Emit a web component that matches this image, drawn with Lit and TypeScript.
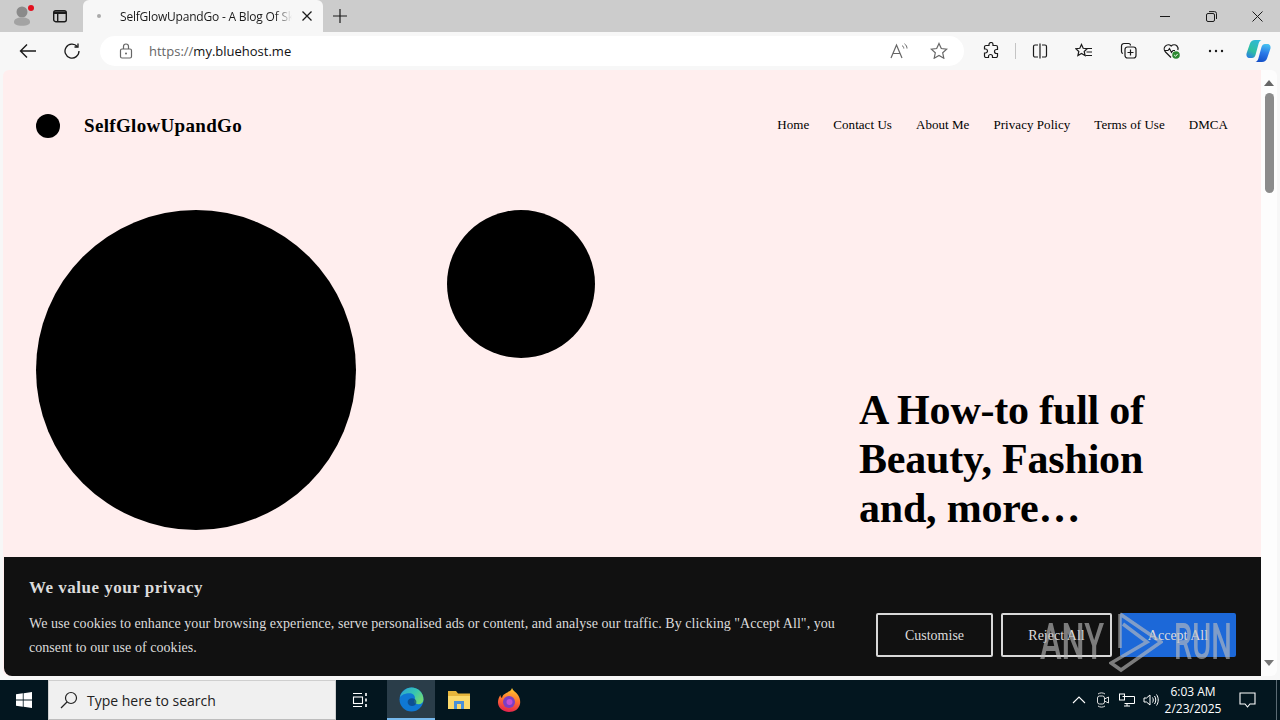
import { LitElement, html, css, svg } from 'lit';
import { customElement } from 'lit/decorators.js';

const icon = (w: number, h: number, body: unknown, vb = `0 0 ${w} ${h}`) => html`
  <svg width=${w} height=${h} viewBox=${vb} fill="none" stroke="currentColor" stroke-width="1.2">${body}</svg>
`;

const navLinks = ['Home', 'Contact Us', 'About Me', 'Privacy Policy', 'Terms of Use', 'DMCA'];

@customElement('browser-chrome')
export class BrowserChrome extends LitElement {
  static styles = css`
    :host { display: block; font-family: "Open Sans", "Noto Sans", sans-serif; color: #1a1a1a; }
    .tabstrip { height: 32px; background: #cccccc; display: flex; align-items: flex-end; }
    .profile { width: 43px; height: 32px; display: flex; align-items: center; justify-content: center; position: relative; padding-left: 1px; box-sizing: border-box; }
    .dot { position: absolute; top: 5px; left: 28px; width: 6px; height: 6px; border-radius: 50%; background: #e3101f; }
    .tabs-btn { width: 34px; height: 32px; display: flex; align-items: center; justify-content: center; margin-right: 6px; }
    .tab { width: 240px; height: 32px; box-sizing: border-box; background: #f7f7f7; border-radius: 6px 6px 0 0; display: flex; align-items: center; padding-left: 14px; font-size: 12px; }
    .favicon { width: 4px; height: 4px; border-radius: 50%; background: #aaa; margin-right: 19px; flex: none; }
    .tab-title { width: 172px; white-space: nowrap; overflow: hidden; flex: none; letter-spacing: -0.2px; -webkit-mask-image: linear-gradient(90deg, #000 90%, transparent); mask-image: linear-gradient(90deg, #000 90%, transparent); }
    .tab-close { margin-left: 9px; display: flex; }
    .plus { margin-left: 9px; height: 32px; display: flex; align-items: center; }
    .spacer { flex: 1; }
    .win { width: 46px; height: 32px; display: flex; align-items: center; justify-content: center; }
    .toolbar { height: 36px; box-sizing: border-box; padding-top: 1px; background: #f7f7f7; display: flex; align-items: center; }
    .nav-btn { width: 44px; height: 35px; display: flex; align-items: center; justify-content: center; flex: none; }
    .nav-btn.first { margin-left: 6px; }
    .address { width: 864px; height: 30px; box-sizing: border-box; margin-left: 6px; background: #fff; border-radius: 15px; display: flex; align-items: center; padding-left: 19px; font-size: 13px; flex: none; }
    .url { margin-left: 16px; color: #111; flex: 1; }
    .url span { color: #666; }
    .addr-icon { display: flex; color: #666; margin-right: 22px; }
    .addr-icon.star { margin-right: 16px; }
    .ext { margin-left: 19px; display: flex; }
    .sep { width: 1px; height: 16px; background: #c4c4c4; margin: 0 2px 0 16px; }
    .tool { width: 44px; display: flex; justify-content: center; flex: none; }
    .copilot { margin-left: -2px; }
  `;

  render() {
    return html`
      <div class="tabstrip">
        <div class="profile">
          ${icon(16, 20, svg`<circle cx="8" cy="6" r="5.5" fill="#8a8a8a" stroke="none"/><path d="M0 16c0-3 3-4.500 8-4.500s8 1.500 8 4.500c0 2.500-3 3.800-8 3.800S0 18.500 0 16z" fill="#a3a3a3" stroke="none"/>`)}
          <div class="dot"></div>
        </div>
        <div class="tabs-btn">
          ${icon(16, 16, svg`<rect x="1.700" y="2.700" width="12.600" height="11" rx="2" stroke-width="1.400"/><path d="M5.700 6v7.500" stroke-width="1.400"/><path d="M2 3.500h12V6H2z" fill="currentColor" stroke="none"/>`)}
        </div>
        <div class="tab">
          <div class="favicon"></div>
          <div class="tab-title">SelfGlowUpandGo - A Blog Of Skin</div>
          <div class="tab-close">${icon(12, 12, svg`<path d="M1.500 1.500l9 9M10.500 1.500l-9 9" stroke-width="1.300"/>`)}</div>
        </div>
        <div class="plus">${icon(16, 16, svg`<path d="M8 1v14M1 8h14" stroke-width="1.200"/>`)}</div>
        <div class="spacer"></div>
        <div class="win">${icon(10, 10, svg`<path d="M0 5.500h10" stroke-width="1"/>`)}</div>
        <div class="win">${icon(11, 11, svg`<rect x=".5" y="2.500" width="8" height="8" rx="1.500" stroke-width="1"/><path d="M3 .6h5.500a2 2 0 0 1 2 2V8" stroke-width="1"/>`)}</div>
        <div class="win">${icon(11, 11, svg`<path d="M.5.5l10 10M10.500.5l-10 10" stroke-width="1"/>`)}</div>
      </div>
      <div class="toolbar">
        <div class="nav-btn first">${icon(18, 16, svg`<path d="M17 8H1.500M8 1.500L1.500 8 8 14.500" stroke-width="1.400"/>`)}</div>
        <div class="nav-btn">${icon(16, 16, svg`<path d="M13.300 3.500A7 7 0 1 0 15 8" stroke-width="1.300"/><path d="M14 .5V4h-3.500" stroke-width="1.300"/>`)}</div>
        <div class="address">
          ${icon(14, 16, svg`<rect x="1.500" y="6" width="11" height="9" rx="1.500" stroke="#666"/><path d="M4.500 6V3.500a2.500 2.500 0 0 1 5 0V6" stroke="#666"/><circle cx="7" cy="10.500" r="1" fill="#666" stroke="none"/>`)}
          <div class="url"><span>https://</span>my.bluehost.me</div>
          <div class="addr-icon">${icon(18, 16, svg`<path d="M1 15L6.500 2 12 15M3 10.500h7" stroke-width="1.200"/><path d="M12 2.500c1.200.8 1.800 1.800 1.800 3M14.500.8c1.600 1.200 2.500 2.700 2.500 4.700" stroke-width="1"/>`)}</div>
          <div class="addr-icon star">${icon(18, 17, svg`<path d="M9 1.500l2.300 5 5.400.6-4 3.700 1.100 5.400L9 13.500l-4.800 2.700 1.100-5.400-4-3.700 5.400-.6z" stroke-width="1.200"/>`)}</div>
        </div>
        <div class="ext">${icon(16, 17, svg`<path d="M6 2.500a2 2 0 0 1 4 0v1h3A1.500 1.500 0 0 1 14.500 5v2.500h-1a2 2 0 0 0 0 4h1V14a1.500 1.500 0 0 1-1.500 1.500H9.500v-1a2 2 0 0 0-4 0v1H3A1.500 1.500 0 0 1 1.500 14v-3h1a2 2 0 0 0 0-4h-1V5A1.500 1.500 0 0 1 3 3.500h3z" stroke-width="1.200"/>`)}</div>
        <div class="sep"></div>
        <div class="tool">${icon(16, 16, svg`<path d="M6 2H3a1.500 1.500 0 0 0-1.500 1.500v9A1.500 1.500 0 0 0 3 14h3M10 2h3a1.500 1.500 0 0 1 1.500 1.500v9A1.500 1.500 0 0 1 13 14h-3M8 .5v15" stroke-width="1.200"/>`)}</div>
        <div class="tool">${icon(18, 16, svg`<path d="M6.500 1.500l1.700 3.800 4 .4-3 2.800.9 4-3.600-2-3.600 2 .9-4-3-2.800 4-.4z" stroke-width="1.200"/><path d="M11.500 5.500H17M11.500 9H17M10.500 12.500H17" stroke-width="1.200"/>`)}</div>
        <div class="tool">${icon(17, 17, svg`<path d="M3 11.500A2 2 0 0 1 1.500 9.500V4A2.500 2.500 0 0 1 4 1.500h4.500a2 2 0 0 1 2 2" stroke-width="1.200"/><rect x="5" y="5" width="11" height="11" rx="2.500" stroke-width="1.200"/><path d="M10.500 7.500v6M7.500 10.500h6" stroke-width="1.200"/>`)}</div>
        <div class="tool">${icon(18, 16, svg`<path d="M8 14.500L2.500 9a4 4 0 0 1 5.700-6 4 4 0 0 1 5.800 0 4 4 0 0 1 .8 4" stroke-width="1.200"/><path d="M1.500 7.500H5l1.500-2 2 4 1.500-2h2" stroke-width="1.100"/><circle cx="13" cy="12" r="3.800" fill="#2d8a32" stroke="none"/><path d="M11.200 12l1.300 1.300 2.200-2.400" stroke="#fff" stroke-width="1"/>`)}</div>
        <div class="tool">${icon(16, 4, svg`<circle cx="2" cy="2" r="1.200" fill="currentColor" stroke="none"/><circle cx="8" cy="2" r="1.200" fill="currentColor" stroke="none"/><circle cx="14" cy="2" r="1.200" fill="currentColor" stroke="none"/>`)}</div>
        <div class="tool copilot">
          <svg width="25" height="24" viewBox="0 0 25 24">
            <defs>
              <linearGradient id="cpa" x1="0.7" y1="0" x2="0.2" y2="1"><stop offset="0" stop-color="#2fb8d8"/><stop offset="0.6" stop-color="#2fc0a0"/><stop offset="1" stop-color="#2a80e0"/></linearGradient>
              <linearGradient id="cpb" x1="0.6" y1="0" x2="0.4" y2="1"><stop offset="0" stop-color="#45c0f0"/><stop offset="0.5" stop-color="#2a78e8"/><stop offset="1" stop-color="#1450c8"/></linearGradient>
            </defs>
            <path d="M9 1h6.500c-1.500.5-2.300 1.700-2.800 3.300L9.500 16c-.6 2-1.800 3-3.500 3H3.500C1 19 0 16.500.6 14.200L3.800 5C4.600 2.500 6.500 1 9 1z" fill="url(#cpa)"/>
            <path d="M16 23H9.500c1.500-.5 2.300-1.700 2.800-3.300L15.500 8c.6-2 1.800-3 3.500-3h2.500c2.500 0 3.500 2.500 2.900 4.800L21.200 19c-.8 2.500-2.700 4-5.200 4z" fill="url(#cpb)"/>
          </svg>
        </div>
      </div>
    `;
  }
}

@customElement('web-page')
export class WebPage extends LitElement {
  static styles = css`
    :host { display: block; height: 100%; background: #ffeeee; font-family: "Liberation Serif", serif; color: #000; overflow: hidden; box-sizing: border-box; padding: 0 33px; }
    .header { height: 110px; display: flex; align-items: center; padding-top: 2px; box-sizing: border-box; }
    .logo { width: 24px; height: 24px; border-radius: 50%; background: #000; margin-right: 24px; }
    .brand { font-size: 19px; font-weight: 700; letter-spacing: 0.33px; flex: 1; }
    .nav { display: flex; gap: 24px; font-size: 13px; letter-spacing: 0.05px; padding-bottom: 2px; }
    .hero { display: flex; padding-top: 30px; }
    .big { width: 320px; height: 320px; border-radius: 50%; background: #000; flex: none; }
    .small { width: 148px; height: 148px; border-radius: 50%; background: #000; flex: none; margin-left: 91px; }
    h1 { margin: 176px 0 0 264px; font-size: 42px; line-height: 49px; font-weight: 700; letter-spacing: -0.2px; width: 340px; flex: none; }
  `;

  render() {
    return html`
      <div class="header">
        <div class="logo"></div>
        <div class="brand">SelfGlowUpandGo</div>
        <div class="nav">${navLinks.map((l) => html`<span>${l}</span>`)}</div>
      </div>
      <div class="hero">
        <div class="big"></div>
        <div class="small"></div>
        <h1>A How-to full of Beauty, Fashion and, more…</h1>
      </div>
    `;
  }
}

@customElement('app-root')
export class AppRoot extends LitElement {
  static styles = css`
    :host { display: flex; flex-direction: column; width: 1280px; height: 720px; overflow: hidden; position: relative; background: #f7f7f7; }
    .viewport { height: 612px; display: flex; box-sizing: border-box; padding: 2px 0 4px 3px; position: relative; flex: none; }
    .content { flex: 1; min-width: 0; border-radius: 6px 0 0 6px; overflow: hidden; position: relative; }
    .scrollbar { width: 16px; margin-right: 3px; padding: 5px 0; box-sizing: border-box; background: #fdfdfd; display: flex; flex-direction: column; align-items: center; border-radius: 0 6px 6px 0; }
    .arrow { height: 16px; display: flex; align-items: center; justify-content: center; flex: none; }
    .thumb { width: 9px; height: 100px; background: #8b8b8b; border-radius: 4.500px; margin-top: 2px; flex: none; }
    .track { flex: 1; }
    .cookie { position: absolute; left: 4px; right: 19px; bottom: 4px; height: 119px; background: #111; color: #dcdcdc; border-radius: 0 0 0 8px; font-family: "Liberation Serif", serif; display: flex; box-sizing: border-box; padding: 0 25px; align-items: flex-start; }
    .cookie-text { width: 822px; flex: none; padding-top: 21px; }
    .cookie-title { font-size: 17px; font-weight: 700; line-height: 20px; letter-spacing: 0.5px; margin-bottom: 14px; }
    .cookie-body { font-size: 14px; line-height: 24px; letter-spacing: 0.05px; }
    .cookie-btns { display: flex; gap: 8px; margin: 56px 0 0 25px; flex: none; }
    .btn { height: 44px; box-sizing: border-box; border: 2px solid #d8d8d8; border-radius: 2px; font-size: 14px; display: flex; align-items: center; justify-content: center; padding-top: 1px; }
    .btn.customise { width: 117px; }
    .btn.reject { width: 111px; }
    .btn.accept { width: 116px; background: #1c68d8; border-color: #1c68d8; }
    .taskbar { height: 40px; background: #03161f; display: flex; align-items: stretch; color: #fff; font-family: "Open Sans", sans-serif; flex: none; }
    .start { width: 48px; display: flex; align-items: center; justify-content: center; }
    .search { width: 288px; box-sizing: border-box; background: #f0f0f0; border: 1px solid #cfcfcf; border-bottom: 1px solid #bdbdbd; color: #222; display: flex; align-items: center; padding-left: 11px; gap: 9px; font-size: 14px; }
    .tb { width: 48px; display: flex; align-items: center; justify-content: center; flex: none; box-sizing: border-box; }
    .tb.task { width: 51px; padding-right: 3px; }
    .tb.fox { margin-left: 2px; }
    .tb.active { background: #2a3d49; border-bottom: 2px solid #76b9ed; }
    .tb-spacer { flex: 1; }
    .tray { display: flex; align-items: center; }
    .tray-icon { width: 24px; display: flex; justify-content: center; }
    .clock { width: 60px; text-align: center; font-size: 12px; line-height: 17px; white-space: nowrap; }
    .notif { width: 48px; display: flex; align-items: center; justify-content: center; margin-right: 5px; }
    .show-desktop { width: 4px; border-left: 1px solid #5a6a73; box-sizing: border-box; }
    .watermark { position: absolute; left: 1040px; top: 611px; width: 192px; height: 62px; display: flex; align-items: center; color: rgba(190,190,190,0.62); font-family: "Roboto", "Liberation Sans", sans-serif; font-size: 50px; font-weight: 500; pointer-events: none; white-space: nowrap; }
    .wm-any, .wm-run { display: block; flex: none; transform-origin: left center; }
    .wm-any { width: 63px; transform: scaleX(0.65); }
    .wm-run { width: 60px; transform: scaleX(0.58); margin-left: 11px; }
    .wm-logo { margin-left: 6px; flex: none; }
  `;

  render() {
    return html`
      <browser-chrome></browser-chrome>
      <div class="viewport">
        <div class="content"><web-page></web-page></div>
        <div class="scrollbar">
          <div class="arrow"><svg width="10" height="6" viewBox="0 0 10 6"><path d="M5 0l5 6H0z" fill="#666"/></svg></div>
          <div class="thumb"></div>
          <div class="track"></div>
          <div class="arrow"><svg width="10" height="6" viewBox="0 0 10 6"><path d="M5 6L0 0h10z" fill="#777"/></svg></div>
        </div>
        <div class="cookie">
          <div class="cookie-text">
            <div class="cookie-title">We value your privacy</div>
            <div class="cookie-body">We use cookies to enhance your browsing experience, serve personalised ads or content, and analyse our traffic. By clicking "Accept All", you consent to our use of cookies.</div>
          </div>
          <div class="cookie-btns">
            <div class="btn customise">Customise</div>
            <div class="btn reject">Reject All</div>
            <div class="btn accept">Accept All</div>
          </div>
        </div>
      </div>
      <div class="taskbar">
        <div class="start">
          <svg width="16" height="16" viewBox="0 0 16 16" fill="#fff"><path d="M0 2.300l6.800-1v6.300H0zM7.600 1.200L16 0v7.600H7.600zM0 8.400h6.800v6.300L0 13.700zM7.600 8.400H16V16l-8.400-1.200z"/></svg>
        </div>
        <div class="search">
          <svg width="18" height="18" viewBox="0 0 18 18" fill="none" stroke="#222" stroke-width="1.200"><circle cx="11" cy="7" r="5.500"/><path d="M7 11l-6 6"/></svg>
          <span>Type here to search</span>
        </div>
        <div class="tb task">
          <svg width="16" height="16" viewBox="0 0 16 16" fill="none" stroke="#fff" stroke-width="1.100"><path d="M1 1.500h9M1 14.500h9"/><rect x="1.500" y="5" width="9" height="6.500"/><path d="M14 1v3M14 6.500v3M14 12v3" stroke-width="1.600"/></svg>
        </div>
        <div class="tb active">
          <svg width="25" height="25" viewBox="0 0 24 24">
            <defs><linearGradient id="eg" x1="0" y1="0" x2="1" y2="0.6"><stop offset="0" stop-color="#2b9fd8"/><stop offset="0.6" stop-color="#37c6b0"/><stop offset="1" stop-color="#6fd878"/></linearGradient></defs>
            <circle cx="12" cy="12" r="11.500" fill="#0f78d4"/>
            <path d="M.8 10C2.500 3.500 8 .5 12 .5c6.500 0 11.500 5 11.500 11.500 0 3-2 4.500-5 4.500-2.500 0-4.500-1-4-3 .3-1 .8-1.500.8-3C15.300 8 13 6 10 6 6 6 2.300 7.500.8 10z" fill="url(#eg)"/>
            <ellipse cx="12.500" cy="14.500" rx="4.200" ry="3.800" fill="#0c3f7a" opacity="0.7"/>
          </svg>
        </div>
        <div class="tb">
          <svg width="24" height="20" viewBox="0 0 24 20">
            <path d="M1 1h8l2 2.500h12V19H1z" fill="#e6b53c"/>
            <path d="M1 6h22v13H1z" fill="#fbd96b"/>
            <rect x="7" y="11" width="10" height="3" fill="#4a90d9"/>
            <rect x="7" y="14" width="3" height="5" fill="#4a90d9"/>
            <rect x="14" y="14" width="3" height="5" fill="#4a90d9"/>
          </svg>
        </div>
        <div class="tb fox">
          <svg width="24" height="26" viewBox="0 0 24 26">
            <defs><linearGradient id="ff" x1="0.6" y1="0" x2="0.4" y2="1"><stop offset="0" stop-color="#ffcb2d"/><stop offset="0.5" stop-color="#ff7030"/><stop offset="1" stop-color="#e3204f"/></linearGradient></defs>
            <path d="M15 1c1 3 4 4 6 7 2 3 2.500 6 2 9-1 5-5.500 8-11 8S1.500 21.500 1 16c-.2-3 1-6 2.500-8 0 1.500.5 2.500 1.500 3C5.500 7 10 6 11 5c2-1 3.500-2 4-4z" fill="url(#ff)"/>
            <circle cx="12" cy="15" r="6" fill="#7b3fc4"/>
            <circle cx="12.500" cy="15" r="3" fill="#c24dd4"/>
          </svg>
        </div>
        <div class="tb-spacer"></div>
        <div class="tray">
          <div class="tray-icon"><svg width="14" height="8" viewBox="0 0 14 8" fill="none" stroke="#fff" stroke-width="1.100"><path d="M1 7l6-6 6 6"/></svg></div>
          <div class="tray-icon"><svg width="14" height="16" viewBox="0 0 14 16" fill="none" stroke="#ddd" stroke-width="1"><rect x="1.500" y="4" width="7" height="8" rx="2"/><path d="M8.500 7l4-2v6l-4-2M2 2c2-1.500 5-1.500 7 0M2 14c2 1.500 5 1.500 7 0"/></svg></div>
          <div class="tray-icon"><svg width="16" height="14" viewBox="0 0 16 14" fill="none" stroke="#fff" stroke-width="1"><path d="M3.500 3.500h12v7h-10M8 10.500V13M5 13h6"/><rect x=".5" y="1" width="5" height="6"/></svg></div>
          <div class="tray-icon"><svg width="16" height="14" viewBox="0 0 16 14" fill="none" stroke="#fff" stroke-width="1"><path d="M1 5h2.500L7 2v10L3.500 9H1zM9.500 4.500c1 1.500 1 3.500 0 5M11.500 3c1.700 2.300 1.700 5.700 0 8M13.500 1.500c2.300 3.200 2.300 7.800 0 11"/></svg></div>
          <div class="clock">6:03 AM<br />2/23/2025</div>
        </div>
        <div class="notif">
          <svg width="17" height="16" viewBox="0 0 17 16" fill="none" stroke="#fff" stroke-width="1.100"><path d="M1 1h15v11h-5l-2.500 3L6 12H1z"/></svg>
        </div>
        <div class="show-desktop"></div>
      </div>
      <div class="watermark">
        <span class="wm-any">ANY</span>
        <svg class="wm-logo" width="54" height="62" viewBox="0 0 54 62" fill="none" stroke="currentColor" stroke-width="3.500"><path d="M11 3l41 28-40 28-10-7 36-21L14 13M11 3v34"/></svg>
        <span class="wm-run">RUN</span>
      </div>
    `;
  }
}
